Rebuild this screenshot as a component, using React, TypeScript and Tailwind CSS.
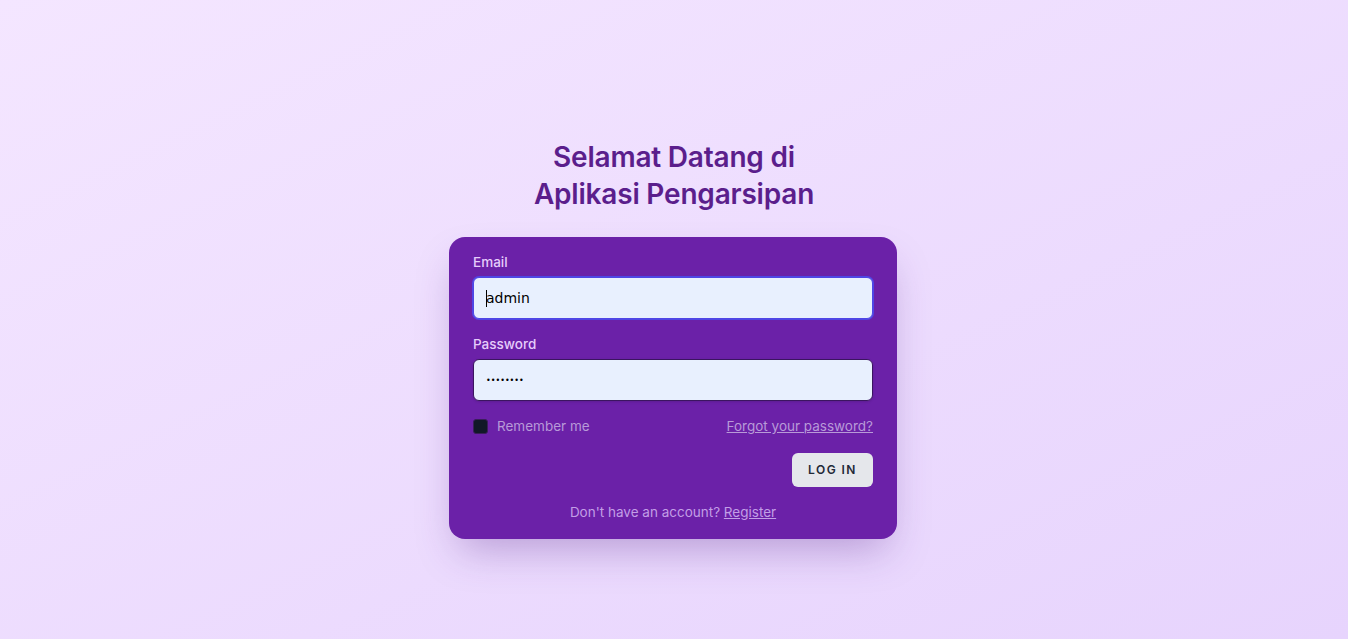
import React from "react";

export default function App() {
  return (
    <div
      className="min-h-screen w-full bg-gradient-to-br from-[#f4e6ff] to-[#e7d4fd] flex flex-col items-center pt-[139px]"
      style={{ fontFamily: "Inter, 'Noto Sans', sans-serif" }}
    >
      <h1 className="text-center text-[28px] leading-[37px] font-semibold text-[#5b1e8c] tracking-[-0.2px]">
        Selamat Datang di
        <br />
        Aplikasi Pengarsipan
      </h1>

      <div className="mt-[24px] mr-[2px] w-[448px] rounded-2xl bg-[#6b21a8] px-6 pt-[15px] pb-[16px] shadow-[0_20px_40px_-10px_rgba(90,40,140,0.35)]">
        <form onSubmit={(e) => e.preventDefault()}>
          <label className="block text-[13.5px] leading-5 font-medium text-[#e6cdfb]">Email</label>
          <div className="relative mt-[5px]">
            <input
              type="text"
              defaultValue="admin"
              className="block h-[42px] w-full rounded-md border border-[#4f46e5] bg-[#e8f0fe] px-[12px] text-[14px] text-black outline-none ring-1 ring-[#4f46e5]"
              style={{ fontFamily: "'DejaVu Sans', sans-serif" }}
            />
            <span className="absolute left-[13px] top-[13px] h-[17px] w-px bg-black" />
          </div>

          <label className="mt-[15px] block text-[13.5px] leading-5 font-medium text-[#e6cdfb]">Password</label>
          <input
            type="password"
            defaultValue="12345678"
            className="mt-[5px] block h-[42px] w-full rounded-md border border-[#3b1560] bg-[#e8f0fe] px-[12px] text-[8px] text-black shadow-sm outline-none"
            style={{ fontFamily: "'DejaVu Sans', sans-serif" }}
          />

          <div className="mt-[15px] flex items-center justify-between">
            <label className="flex items-center">
              <span className="block h-[15px] w-[15px] rounded-[3px] border border-[#3a1e5a] bg-[#111827]" />
              <span className="ml-[9px] text-[13.5px] text-[#b89ad8]">Remember me</span>
            </label>
            <a href="#" className="text-[13.5px] text-[#b89ad8] underline">
              Forgot your password?
            </a>
          </div>

          <div className="mt-[17px] flex justify-end">
            <button
              type="submit"
              className="h-[34px] w-[81px] rounded-md bg-[#e5e7eb] text-[12px] font-semibold uppercase tracking-[0.12em] text-[#1f2937]"
            >
              Log in
            </button>
          </div>

          <p className="mt-[15px] text-center text-[13.5px] text-[#c29ee6]">
            Don't have an account?{" "}
            <a href="#" className="underline">
              Register
            </a>
          </p>
        </form>
      </div>
    </div>
  );
}
